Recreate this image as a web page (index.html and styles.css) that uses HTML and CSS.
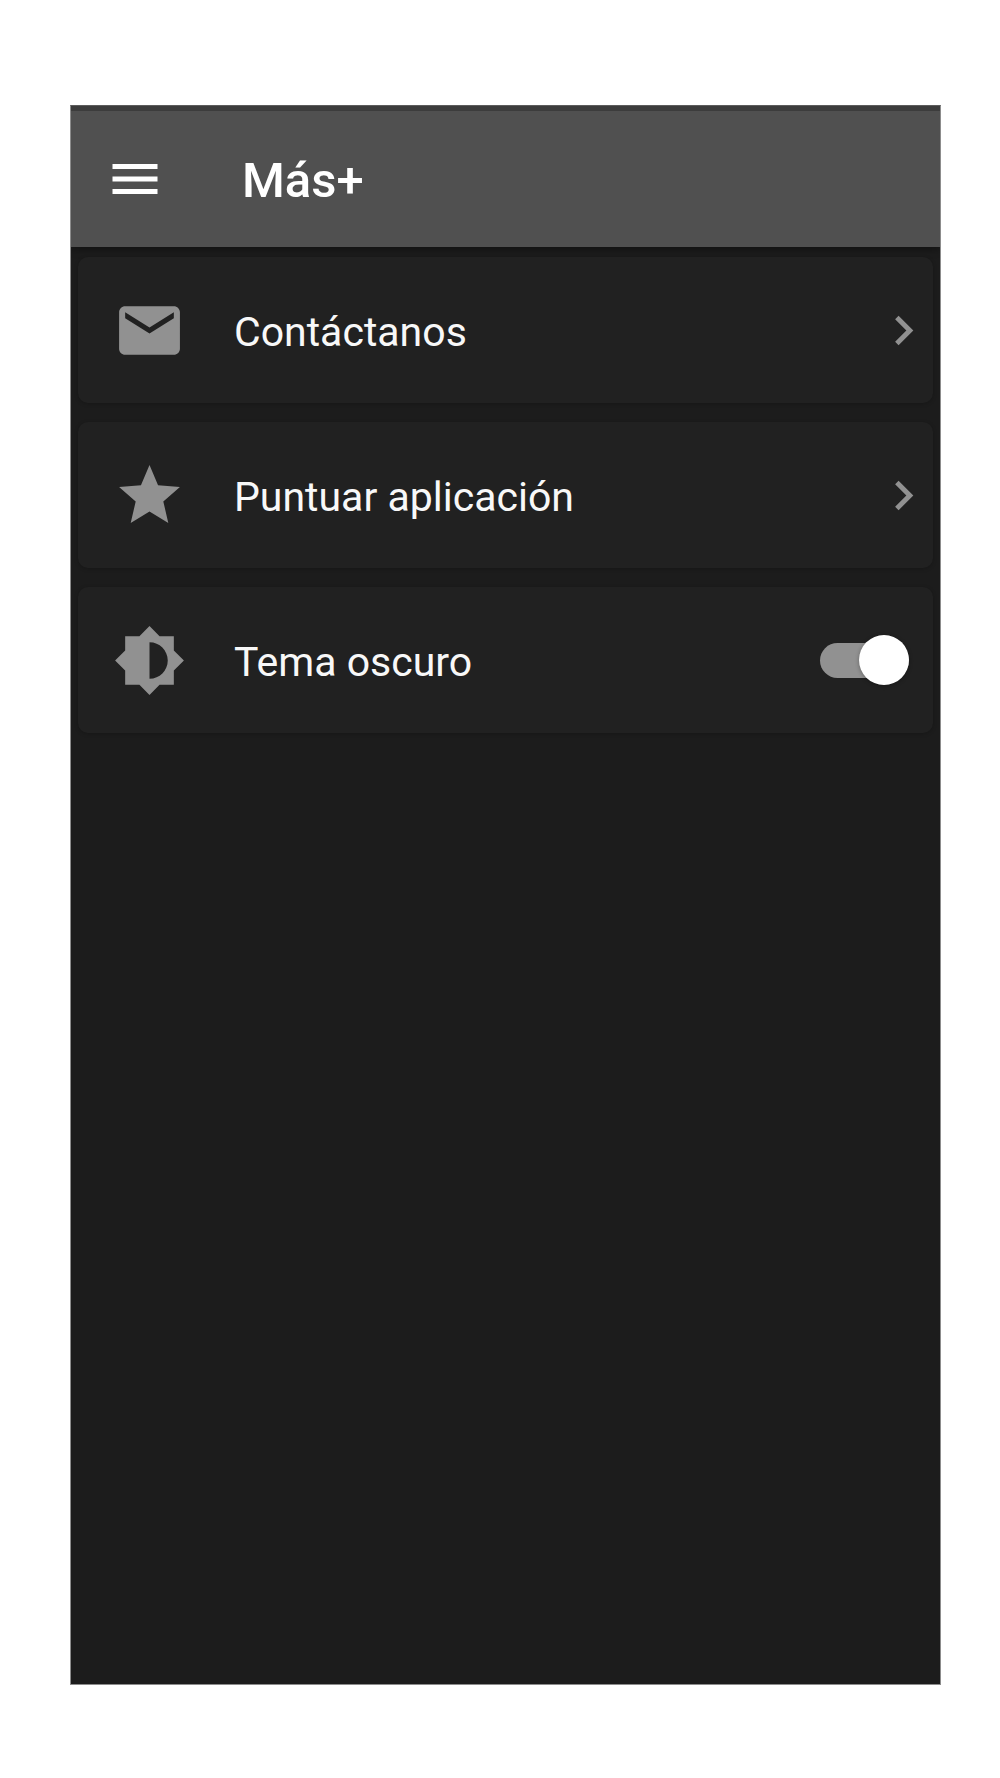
FILE: index.html
```html
<!DOCTYPE html>
<html lang="es">
  <head>
    <meta charset="UTF-8" />
    <meta name="viewport" content="width=device-width, initial-scale=1.0" />
    <title>Más+</title>
    <link rel="stylesheet" href="styles.css">
  </head>
  <body>
    <div class="screen">
      <!-- App bar -->
      <header class="app-bar">
        <button type="button" class="menu-btn" aria-label="Menú">
          <svg viewBox="0 0 24 24"><path d="M3 18h18v-2H3v2zm0-5h18v-2H3v2zm0-7v2h18V6H3z" /></svg>
        </button>
        <h1 class="title">Más+</h1>
      </header>

      <!-- Options -->
      <main class="options">
        <a href="#" class="card">
          <svg class="icon" viewBox="0 0 24 24">
            <path d="M20 4H4c-1.100 0-1.990.9-1.990 2L2 18c0 1.100.9 2 2 2h16c1.100 0 2-.9 2-2V6c0-1.100-.9-2-2-2zm0 4l-8 5-8-5V6l8 5 8-5v2z" />
          </svg>
          <span class="label">Contáctanos</span>
          <svg class="chevron" viewBox="0 0 24 24">
            <path d="M8.590 16.590L13.170 12 8.590 7.410 10 6l6 6-6 6-1.410-1.410z" />
          </svg>
        </a>

        <a href="#" class="card">
          <svg class="icon" viewBox="0 0 24 24">
            <path d="M12 17.270L18.180 21l-1.640-7.030L22 9.240l-7.190-.61L12 2 9.190 8.630 2 9.240l5.460 4.730L5.820 21z" />
          </svg>
          <span class="label">Puntuar aplicación</span>
          <svg class="chevron" viewBox="0 0 24 24">
            <path d="M8.590 16.590L13.170 12 8.590 7.410 10 6l6 6-6 6-1.410-1.410z" />
          </svg>
        </a>

        <label class="card" for="darkTheme">
          <svg class="icon" viewBox="0 0 24 24">
            <path d="M20 15.310L23.310 12 20 8.690V4h-4.690L12 .69 8.690 4H4v4.690L.69 12 4 15.310V20h4.690L12 23.310 15.310 20H20v-4.690zM12 18V6c3.310 0 6 2.690 6 6s-2.690 6-6 6z" />
          </svg>
          <span class="label">Tema oscuro</span>
          <input type="checkbox" class="switch" id="darkTheme" checked />
        </label>
      </main>
    </div>
  </body>
</html>
```

FILE: styles.css
```css
* {
  margin: 0;
  padding: 0;
  box-sizing: border-box;
}

body {
  min-height: 100vh;
  padding: 105px 59px 93px 70px;
  display: flex;
  background: #fff;
  font-family: Roboto, sans-serif;
}

.screen {
  flex: 1;
  display: flex;
  flex-direction: column;
  overflow: hidden;
  background: #1c1c1c;
  border: 1px solid #8c8c8c;
  border-top-color: #5c5c5c;
}

.app-bar {
  display: flex;
  align-items: center;
  gap: 77px;
  padding: 38px 34px;
  background: #505050;
  border-top: 5px solid #3c3c3c;
  box-shadow: 0 2px 8px rgba(0, 0, 0, 0.4);
}

.menu-btn {
  width: 60px;
  height: 60px;
  border: none;
  background: none;
  cursor: pointer;
}

.menu-btn svg {
  display: block;
  width: 100%;
  fill: #fff;
}

.title {
  padding-top: 4px;
  color: #fff;
  font-size: 49px;
  font-weight: 500;
  line-height: 56px;
}

.options {
  display: flex;
  flex-direction: column;
  gap: 19px;
  padding: 10px 7px;
}

.card {
  display: flex;
  align-items: center;
  height: 146px;
  padding-left: 35px;
  border-radius: 10px;
  background: #212121;
  box-shadow: 0 1px 4px rgba(0, 0, 0, 0.2);
  color: #f8f8f8;
  text-decoration: none;
  cursor: pointer;
}

.icon {
  width: 73px;
  height: 73px;
  fill: #919191;
}

.label {
  flex: 1;
  margin-left: 48px;
  padding-top: 3px;
  font-size: 41px;
  line-height: 48px;
}

.chevron {
  width: 59px;
  height: 59px;
  fill: #919191;
}

.switch {
  appearance: none;
  display: flex;
  align-items: center;
  width: 89px;
  height: 35px;
  margin-right: 24px;
  border-radius: 18px;
  background: #919191;
  cursor: pointer;
}

.switch::before {
  content: "";
  width: 50px;
  height: 50px;
  border-radius: 50%;
  background: #fff;
  box-shadow: 0 1px 4px rgba(0, 0, 0, 0.3);
}

.switch:checked {
  justify-content: flex-end;
}
```
